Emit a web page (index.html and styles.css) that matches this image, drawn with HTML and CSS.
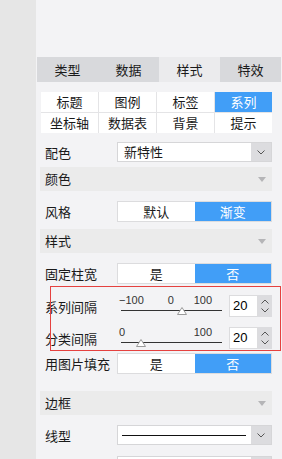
FILE: index.html
```html
<!DOCTYPE html>
<html lang="zh-CN">
<head>
  <meta charset="UTF-8" />
  <meta name="viewport" content="width=device-width, initial-scale=1" />
  <title>图表属性 - 样式</title>
  <link rel="stylesheet" href="styles.css">
</head>
<body>

  <div class="side"></div>

  <div class="panel">
    <div class="tabs">
      <div class="tab">类型</div>
      <div class="tab">数据</div>
      <div class="tab active">样式</div>
      <div class="tab">特效</div>
    </div>

    <div class="content">
      <div class="subtabs">
        <div class="sub">标题</div>
        <div class="sub">图例</div>
        <div class="sub">标签</div>
        <div class="sub on">系列</div>
        <div class="sub">坐标轴</div>
        <div class="sub">数据表</div>
        <div class="sub">背景</div>
        <div class="sub">提示</div>
      </div>

      <div class="row r-scheme">
        <span class="lbl">配色</span>
        <div class="select">
          <span class="val">新特性</span>
          <span class="arrow"><svg width="8" height="5" viewBox="0 0 8 5"><polyline points="0.5,0.5 4,4 7.5,0.5" fill="none" stroke="#555" stroke-width="1"/></svg></span>
        </div>
      </div>

      <div class="group g-color">颜色<span class="caret"></span></div>

      <div class="row r-style">
        <span class="lbl">风格</span>
        <div class="toggle">
          <span class="opt">默认</span>
          <span class="opt on">渐变</span>
        </div>
      </div>

      <div class="group g-style">样式<span class="caret"></span></div>

      <div class="row r-fixed">
        <span class="lbl">固定柱宽</span>
        <div class="toggle">
          <span class="opt">是</span>
          <span class="opt on">否</span>
        </div>
      </div>

      <div class="row r-slider1">
        <span class="lbl">系列间隔</span>
        <div class="slider-ctrl">
          <div class="slider">
            <div class="ticks"><span>−100</span><span class="mid">0</span><span class="end">100</span></div>
            <div class="track"><svg class="thumb" style="left: 60%" width="11" height="8" viewBox="0 0 11 8"><polygon points="5.5,0.5 10,7.5 1,7.5" fill="#fff" stroke="#9a9a9a"/></svg></div>
          </div>
          <div class="num">
            <span class="num-val">20</span>
            <span class="spin">
              <svg width="8" height="5" viewBox="0 0 8 5"><polyline points="0.5,4.5 4,1 7.5,4.5" fill="none" stroke="#555"/></svg>
              <svg width="8" height="5" viewBox="0 0 8 5"><polyline points="0.5,0.5 4,4 7.5,0.5" fill="none" stroke="#555"/></svg>
            </span>
          </div>
        </div>
      </div>

      <div class="row r-slider2">
        <span class="lbl">分类间隔</span>
        <div class="slider-ctrl">
          <div class="slider">
            <div class="ticks"><span>0</span><span class="end">100</span></div>
            <div class="track"><svg class="thumb" style="left: 20%" width="11" height="8" viewBox="0 0 11 8"><polygon points="5.5,0.5 10,7.5 1,7.5" fill="#fff" stroke="#9a9a9a"/></svg></div>
          </div>
          <div class="num">
            <span class="num-val">20</span>
            <span class="spin">
              <svg width="8" height="5" viewBox="0 0 8 5"><polyline points="0.5,4.5 4,1 7.5,4.5" fill="none" stroke="#555"/></svg>
              <svg width="8" height="5" viewBox="0 0 8 5"><polyline points="0.5,0.5 4,4 7.5,0.5" fill="none" stroke="#555"/></svg>
            </span>
          </div>
        </div>
      </div>

      <div class="row r-image">
        <span class="lbl">用图片填充</span>
        <div class="toggle">
          <span class="opt">是</span>
          <span class="opt on">否</span>
        </div>
      </div>

      <div class="group g-border">边框<span class="caret"></span></div>

      <div class="row r-line">
        <span class="lbl">线型</span>
        <div class="select">
          <span class="val"><span class="line-sample"></span></span>
          <span class="arrow"><svg width="8" height="5" viewBox="0 0 8 5"><polyline points="0.5,0.5 4,4 7.5,0.5" fill="none" stroke="#555" stroke-width="1"/></svg></span>
        </div>
      </div>

      <div class="row r-next">
        <span class="lbl"></span>
        <div class="select">
          <span class="val"></span>
          <span class="arrow"></span>
        </div>
      </div>
    </div>
  </div>

  <div class="mark"></div>

</body>
</html>
```

FILE: styles.css
```css
body {
  margin: 0;
  height: 459px;
  overflow: hidden;
  display: flex;
  background: #f3f3f5;
  color: #1a1a1a;
  font-family: "Noto Sans CJK SC", "Liberation Sans", sans-serif;
  font-size: 13px;
  position: relative;
}
.side {
  width: 36px;
  flex: none;
  background: #e6e6e6;
}
.panel {
  flex: 1;
  padding-top: 57px;
}
.tabs {
  display: flex;
  height: 25px;
  margin: 0 1px;
}
.tab {
  flex: 1;
  background: #d8d9dc;
  text-align: center;
  line-height: 25px;
}
.tab.active {
  background: #ebebed;
}
.content {
  padding: 0 10px 0 4px;
}
.subtabs {
  margin: 10px 0 0 1px;
  display: grid;
  grid-template-columns: repeat(4, 1fr);
  gap: 1px;
  background: #e4e4e6;
}
.sub {
  background: #fff;
  height: 20px;
  line-height: 20px;
  text-align: center;
}
.sub.on {
  background: #419ef7;
  color: #fff;
}
.row {
  display: flex;
  align-items: center;
}
.lbl {
  width: 77px;
  flex: none;
  padding-left: 5px;
  box-sizing: border-box;
  white-space: nowrap;
}
.select {
  flex: 1;
  height: 20px;
  display: flex;
  background: #fff;
  border: 1px solid #d6d6d8;
  box-sizing: border-box;
}
.select .val {
  flex: 1;
  padding-left: 6px;
  line-height: 18px;
  display: flex;
  align-items: center;
}
.select .arrow {
  width: 20px;
  background: #dcdcdf;
  display: flex;
  align-items: center;
  justify-content: center;
}
.line-sample {
  display: block;
  width: 124px;
  height: 1px;
  margin-left: -2px;
  background: #111;
}
.group {
  height: 24px;
  line-height: 24px;
  background: #ebebeb;
  padding: 0 6px 0 5px;
  display: flex;
  justify-content: space-between;
  align-items: center;
}
.caret {
  width: 0;
  height: 0;
  border-left: 4px solid transparent;
  border-right: 4px solid transparent;
  border-top: 5px solid #b5b5b7;
}
.toggle {
  flex: 1;
  height: 21px;
  display: flex;
  border: 1px solid #dcdcde;
  box-sizing: border-box;
  background: #fff;
}
.opt {
  flex: 1;
  text-align: center;
  line-height: 19px;
}
.opt.on {
  background: #419ef7;
  color: #fff;
}
.slider-ctrl {
  flex: 1;
  display: flex;
  height: 22px;
}
.slider {
  width: 101px;
  margin-left: 4px;
}
.ticks {
  display: flex;
  height: 11px;
  margin-left: -2px;
  padding-right: 10px;
  font-family: "Liberation Sans", Arial, sans-serif;
  font-size: 11px;
  line-height: 11px;
  color: #333;
}
.ticks .mid {
  margin-left: 24px;
}
.ticks .end {
  margin-left: auto;
}
.track {
  position: relative;
  margin-top: 4px;
  height: 1px;
  background: #333;
}
.thumb {
  position: absolute;
  top: -3px;
  transform: translateX(-50%);
}
.num {
  margin-left: 7px;
  flex: 1;
  display: flex;
}
.num-val {
  flex: 1;
  background: #fff;
  border: 1px solid #dcdcde;
  padding-left: 3px;
  font-family: "Liberation Sans", Arial, sans-serif;
  font-size: 13px;
  line-height: 20px;
  color: #000;
}
.spin {
  width: 14px;
  background: #dcdcdf;
  display: flex;
  flex-direction: column;
  justify-content: space-around;
  align-items: center;
  padding: 2px 0;
  box-sizing: border-box;
}
.r-scheme { margin-top: 9px; }
.g-color { margin-top: 5px; }
.r-style { margin-top: 10px; }
.g-style { margin-top: 7px; }
.r-fixed { margin-top: 10px; }
.r-slider1 { margin-top: 11px; }
.r-slider2 { margin-top: 10px; }
.r-image { margin-top: 4px; }
.g-border { margin-top: 17px; }
.r-line { margin-top: 10px; }
.r-next { margin-top: 11px; }

/* annotation frame drawn over the two spacing rows */
.mark {
  position: absolute;
  left: 50px;
  top: 286px;
  width: 231px;
  height: 65px;
  border: 1px solid #e5413f;
  box-sizing: border-box;
  pointer-events: none;
}
```
